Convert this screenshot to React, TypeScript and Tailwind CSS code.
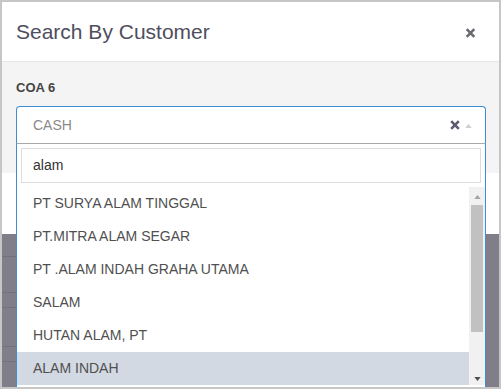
import React from "react";

const items = [
  "PT SURYA ALAM TINGGAL",
  "PT.MITRA ALAM SEGAR",
  "PT .ALAM INDAH GRAHA UTAMA",
  "SALAM",
  "HUTAN ALAM, PT",
  "ALAM INDAH",
];

function XIcon({ className }: { className?: string }) {
  return (
    <svg viewBox="0 0 10 10" className={className} fill="none">
      <path d="M1.2 1.2 L8.8 8.8 M8.8 1.2 L1.2 8.8" stroke="currentColor" strokeWidth="2.6" strokeLinecap="butt" />
    </svg>
  );
}

export default function App() {
  return (
    <div className="w-[501px] h-[389px] border-2 border-[#c6c6c6] bg-white overflow-hidden relative font-['Liberation_Sans',Arial,sans-serif]">
      {/* header */}
      <div className="h-[60px] border-b border-[#e6e6e6] bg-white flex items-center justify-between pl-[14px] pr-[23px]">
        <div className="text-[21px] text-[#4f4e5e] leading-none">Search By Customer</div>
        <XIcon className="w-[11px] h-[10px] text-[#6a6a72] mt-[3px]" />
      </div>
      {/* body */}
      <div className="h-[111px] bg-[#f4f4f4] pl-[14px] pr-[13px] pt-[17px]">
        <div className="text-[13px] font-bold text-[#444] leading-[18px] mb-[9px]">COA 6</div>
        <div className="relative">
          <div className="h-[38px] bg-white border border-[#3a8ed6] border-b-[#aaaaaa] rounded-t-[4px] flex items-center pl-[16px] pr-[13px]">
            <div className="flex-1 text-[14px] text-[#8a8a8a]">CASH</div>
            <XIcon className="w-[10px] h-[10px] text-[#5c5a6e] mr-[1px]" />
            <svg viewBox="0 0 8 5" className="w-[7px] h-[4px] ml-[4px] mt-[2px]">
              <path d="M0 5 L4 0 L8 5 Z" fill="#cfcfcf" />
            </svg>
          </div>
          {/* dropdown */}
          <div className="absolute left-0 right-0 top-[38px] bg-white border-x border-b border-[#3a8ed6] z-10">
            <div className="p-[4px]">
              <div className="h-[35px] border border-[#dcdcdc] flex items-center pl-[11px] text-[14px] text-[#333]">alam</div>
            </div>
            <div className="flex h-[200px]">
              <div className="flex-1">
                {items.map((t, i) => (
                  <div
                    key={t}
                    className={`h-[33px] flex items-center pl-[16px] text-[14px] text-[#505050] ${i === items.length - 1 ? "bg-[#d3d9e3]" : ""}`}
                  >
                    {t}
                  </div>
                ))}
              </div>
              <div className="w-[16px] h-[198px] bg-[#f1f1f1] flex flex-col items-center">
                <svg viewBox="0 0 8 5" className="w-[7px] h-[4px] mt-[8px]">
                  <path d="M0 5 L4 0 L8 5 Z" fill="#a3a3a3" />
                </svg>
                <div className="w-[12px] h-[127px] bg-[#c1c1c1] mt-[6px]" />
                <div className="flex-1" />
                <svg viewBox="0 0 8 5" className="w-[7px] h-[4px] mb-[4px]">
                  <path d="M0 0 L8 0 L4 5 Z" fill="#505050" />
                </svg>
              </div>
            </div>
          </div>
        </div>
      </div>
      {/* white strip */}
      <div className="h-[61px] bg-white" />
      {/* dark backdrop region */}
      <div className="h-[153px] bg-[#7f7e89] flex">
        <div className="w-[14px] flex flex-col">
          <div className="h-[23px] border-b border-[#72717c]" />
          <div className="h-[36px] border-b border-[#72717c]" />
          <div className="h-[15px] border-b border-[#72717c]" />
          <div className="h-[39px] border-b border-[#72717c]" />
          <div className="h-[15px] border-b border-[#72717c]" />
        </div>
        <div className="flex-1" />
      </div>
    </div>
  );
}
